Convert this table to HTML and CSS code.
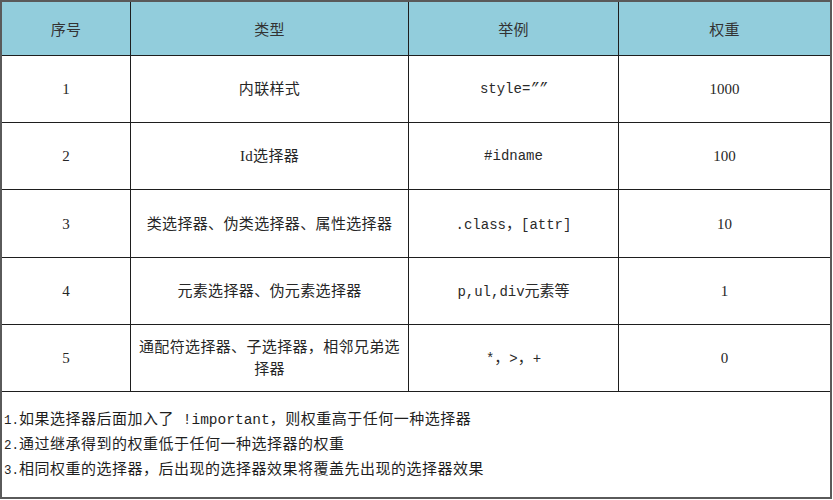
FILE: index.html
```html
<!DOCTYPE html>
<html lang="zh">
<head>
<meta charset="utf-8">
<title>CSS选择器权重</title>
<link rel="stylesheet" href="styles.css">
</head>
<body>
<table class="spec">
  <colgroup>
    <col class="c1"><col class="c2"><col class="c3"><col class="c4">
  </colgroup>
  <thead>
    <tr class="head">
      <th>序号</th><th>类型</th><th>举例</th><th class="last">权重</th>
    </tr>
  </thead>
  <tbody>
    <tr class="row">
      <td>1</td><td class="cn">内联样式</td><td class="code">style=<span class="q">””</span></td><td class="last">1000</td>
    </tr>
    <tr class="row">
      <td>2</td><td class="cn">Id选择器</td><td class="code">#idname</td><td class="last">100</td>
    </tr>
    <tr class="row tall">
      <td>3</td><td class="cn">类选择器、伪类选择器、属性选择器</td><td class="code">.class<span class="cjk">，</span>[attr]</td><td class="last">10</td>
    </tr>
    <tr class="row">
      <td>4</td><td class="cn">元素选择器、伪元素选择器</td><td class="code">p,ul,div<span class="cjk">元素等</span></td><td class="last">1</td>
    </tr>
    <tr class="row">
      <td>5</td><td class="cn">通配符选择器、子选择器，相邻兄弟选择器</td><td class="code">*<span class="cjk">，</span>&gt;<span class="cjk">，</span>+</td><td class="last">0</td>
    </tr>
    <tr class="foot">
      <td colspan="4" class="notes">
        <div><span class="num">1.</span>如果选择器后面加入了<span class="mono"> !important</span>，则权重高于任何一种选择器</div>
        <div><span class="num">2.</span>通过继承得到的权重低于任何一种选择器的权重</div>
        <div><span class="num">3.</span>相同权重的选择器，后出现的选择器效果将覆盖先出现的选择器效果</div>
      </td>
    </tr>
  </tbody>
</table>
</body>
</html>
```

FILE: styles.css
```css
html, body {
  margin: 0;
  padding: 0;
  background: #ffffff;
}

.spec {
  border-collapse: separate;
  border-spacing: 0;
  table-layout: fixed;
  width: 832px;
  border: 2px solid #5a5a5a;
  font-family: "Liberation Serif", "Noto Sans CJK SC", serif;
  font-size: 15px;
  color: #262626;
}

.c1 { width: 129px; }
.c2 { width: 278px; }
.c3 { width: 210px; }
.c4 { width: 211px; }

.spec th,
.spec td {
  box-sizing: border-box;
  padding: 0 5px;
  border-right: 1px solid #1e1e1e;
  border-bottom: 1px solid #1e1e1e;
  text-align: center;
  vertical-align: middle;
  font-weight: normal;
  line-height: 22px;
}

.spec .last {
  border-right: none;
}

.head th {
  height: 54px;
  background: #92cddc;
  color: #333333;
  font-family: "Noto Sans CJK SC", sans-serif;
  font-size: 15px;
  letter-spacing: 0.3px;
}

.row td {
  height: 67px;
}

.row.tall td {
  height: 68px;
}

.spec .cn {
  letter-spacing: 0.35px;
}

.code {
  font-family: "Liberation Mono", "Noto Sans CJK SC", monospace;
  font-size: 14px;
  color: #2a2a2a;
}

.code .cjk {
  font-family: "Noto Sans CJK SC", sans-serif;
  font-size: 15px;
}

.q {
  font-style: italic;
}

.foot td {
  height: 105px;
  border-right: none;
  border-bottom: none;
}

.spec .notes {
  text-align: left;
  padding: 0 0 0 2px;
  font-family: "Noto Sans CJK SC", sans-serif;
  font-size: 15px;
  line-height: 22px;
  letter-spacing: 0.5px;
  color: #1e1e1e;
}

.num {
  font-family: "Liberation Mono", monospace;
  font-size: 12.5px;
  letter-spacing: 0;
}

.mono {
  font-family: "Liberation Mono", monospace;
  font-size: 14.5px;
  letter-spacing: 0;
}
```
